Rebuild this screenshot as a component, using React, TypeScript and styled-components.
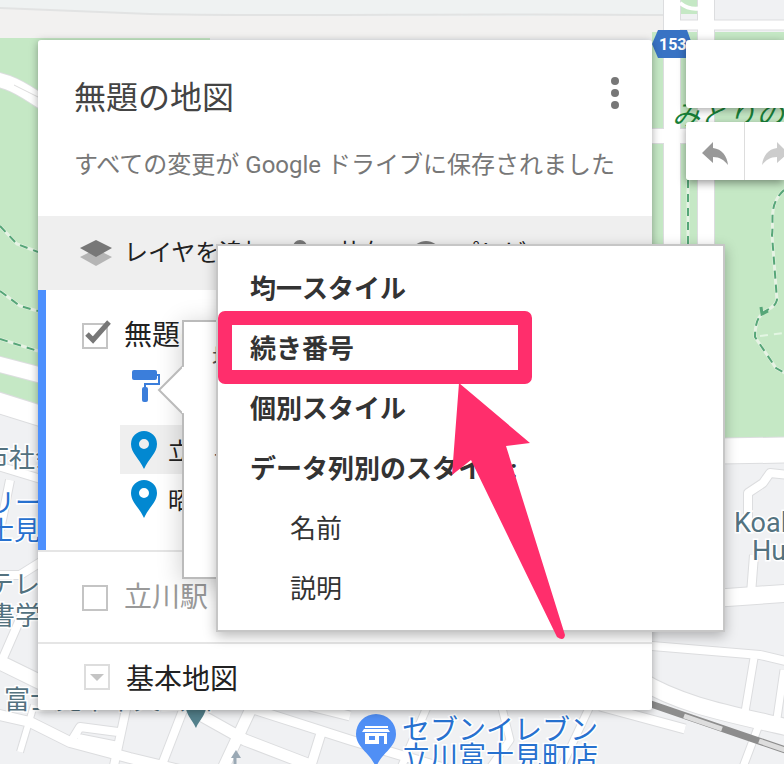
import React from 'react';
import styled, { createGlobalStyle } from 'styled-components';

const GlobalStyle = createGlobalStyle`
  *, *::before, *::after { box-sizing: border-box; }
  body {
    margin: 0;
    font-family: Roboto, "Noto Sans CJK JP", sans-serif;
    color: #222;
    background: #f0f1f3;
  }
  button { font: inherit; color: inherit; border: 0; background: none; padding: 0; cursor: pointer; }
`;

const Page = styled.main`
  position: relative;
  min-height: 100vh;
  overflow: hidden;
  display: flex;
  align-items: flex-start;
  gap: 34px;
  padding: 40px 0 54px 38px;
`;

const MapCanvas = styled.svg`
  position: absolute;
  inset: 0;
  width: 100%;
  height: 100%;
`;

const Panel = styled.section`
  position: relative;
  flex: 1;
  min-width: 0;
  background: #fff;
  border-radius: 3px;
  box-shadow: 0 2px 8px rgba(0, 0, 0, 0.35);
`;

const PanelHeader = styled.header`
  display: flex;
  justify-content: space-between;
  align-items: flex-start;
  height: 176px;
  padding: 34px 28px 0 36px;
`;

const Headings = styled.div`
  display: flex;
  flex-direction: column;
  gap: 27px;
  white-space: nowrap;
`;

const Title = styled.h1`
  margin: 0;
  font-size: 32px;
  line-height: 48px;
  font-weight: 400;
  color: #444;
`;

const SaveStatus = styled.p`
  margin: 0;
  font-size: 24px;
  line-height: 32px;
  color: #777;
`;

const KebabButton = styled.button`
  display: flex;
  width: 18px;
  height: 38px;
  margin-left: -18px;
  svg { width: 18px; height: 38px; }
`;

const ActionBar = styled.nav`
  display: flex;
  align-items: center;
  height: 74px;
  padding-left: 40px;
  background: #efefef;
  gap: 24px;
`;

const ActionButton = styled.button`
  display: flex;
  align-items: center;
  gap: 12px;
  font-size: 24px;
  line-height: 32px;
  white-space: nowrap;
  svg { width: 34px; height: 32px; }
`;

const Layer = styled.section<{ $active?: boolean }>`
  padding: ${(p) => (p.$active ? '26px 0 27px 44px' : '26px 0 24px 44px')};
  box-shadow: ${(p) => (p.$active ? 'inset 8px 0 #4d90fe' : 'none')};
  border-bottom: 2px solid #e5e5e5;
`;

const BaseLayer = styled.section`
  display: flex;
  align-items: center;
  gap: 16px;
  height: 66px;
  padding-left: 46px;
  font-size: 28px;
`;

const LayerTitle = styled.label<{ $muted?: boolean }>`
  display: flex;
  align-items: center;
  gap: 16px;
  font-size: 28px;
  line-height: 40px;
  color: ${(p) => (p.$muted ? '#999' : '#222')};
`;

const CheckBox = styled.span`
  position: relative;
  width: 26px;
  height: 26px;
  input {
    appearance: none;
    display: block;
    width: 26px;
    height: 26px;
    margin: 0;
    border: 2px solid #c4c4c4;
    background: #fff;
  }
  svg {
    position: absolute;
    left: 2px;
    top: -4px;
    width: 28px;
    height: 26px;
    pointer-events: none;
  }
`;

const ExpandButton = styled.button`
  display: flex;
  width: 26px;
  height: 26px;
  border: 2px solid #ddd;
`;

const StyleButton = styled.button`
  display: block;
  height: 34px;
  margin: 13px 0 0 50px;
  svg { display: block; width: 28px; height: 34px; }
`;

const PlaceList = styled.ul`
  list-style: none;
  margin: 22px 0 0 38px;
  padding: 0;
`;

const Place = styled.li<{ $selected?: boolean }>`
  display: flex;
  align-items: center;
  gap: 11px;
  height: 49px;
  padding-left: 11px;
  font-size: 24px;
  background: ${(p) => (p.$selected ? '#efefef' : 'transparent')};
  svg { width: 26px; height: 38px; }
`;

const Bubble = styled.aside`
  position: absolute;
  left: 144px;
  top: 280px;
  width: 420px;
  height: 259px;
  padding: 20px 28px;
  display: flex;
  flex-direction: column;
  gap: 68px;
  background: #fff;
  border: 2px solid #bbb;
  box-shadow: 0 4px 24px rgba(0, 0, 0, 0.2);
  font-size: 22px;
  line-height: 32px;
  color: #555;
`;

const BubblePointer = styled.svg`
  position: absolute;
  left: -28px;
  top: 42px;
  width: 28px;
  height: 52px;
`;

const Menu = styled.div`
  position: absolute;
  left: 178px;
  top: 204px;
  width: 509px;
  padding: 10px 0 14px;
  display: flex;
  flex-direction: column;
  background: #fff;
  border: 2px solid #c6c6c6;
  box-shadow: 0 4px 12px rgba(0, 0, 0, 0.28);
`;

const MenuItem = styled.button<{ $nested?: boolean }>`
  height: 60px;
  padding-left: ${(p) => (p.$nested ? 72 : 32)}px;
  text-align: left;
  font-size: 26px;
  font-weight: ${(p) => (p.$nested ? 400 : 700)};
  color: #333;
`;

const Annotation = styled.svg`
  position: absolute;
  left: -2px;
  top: 62px;
  width: 360px;
  height: 340px;
  pointer-events: none;
`;

const MapTools = styled.div`
  position: relative;
  width: 98px;
  display: flex;
  flex-direction: column;
  gap: 14px;
`;

const SearchBox = styled.input`
  width: 100%;
  height: 68px;
  border: 0;
  padding: 0 16px;
  background: #fff;
  border-radius: 3px 0 0 3px;
  box-shadow: 0 2px 8px rgba(0, 0, 0, 0.35);
`;

const ToolGroup = styled.div`
  display: flex;
  height: 58px;
  background: #fff;
  border-radius: 3px 0 0 3px;
  overflow: hidden;
`;

const ToolShadow = styled.div`
  border-radius: 3px 0 0 3px;
  box-shadow: 0 3px 8px rgba(0, 0, 0, 0.4);
`;

const ToolButton = styled.button`
  flex: none;
  width: 59px;
  padding: 20px 16px;
  border-right: 1px solid #ddd;
  svg { display: block; width: 27px; height: 24px; }
`;

const roads = [
  { d: 'M672 -10V250 M706 -10V250', w: 16 },
  { d: 'M664 25H790', w: 9 },
  { d: 'M650 136H688', w: 14 },
  { d: 'M720 451L790 450', w: 25 },
  { d: 'M-10 78C8 81 18 86 42 102', w: 14 },
  { d: 'M-10 362L44 376', w: 15 },
  { d: 'M-10 400L44 417', w: 20 },
  { d: 'M-5 465L44 480 M10 480L0 530 M-5 575H20L44 560 M24 610L0 665', w: 8 },
  { d: 'M-5 660L44 684', w: 14 },
  { d: 'M-5 714L30 722L70 742L130 758L200 775', w: 10 },
  { d: 'M34 705L20 752', w: 6 },
  { d: 'M72 740L80 727L118 732 M128 700L112 775 M185 705L158 775 M78 738L118 746', w: 8 },
  { d: 'M195 712L245 740L310 765 M255 700L220 775', w: 11 },
  { d: 'M250 708L350 740L450 770 M322 730L308 775 M310 706L350 716', w: 9 },
  { d: 'M430 700L400 770 M500 700L510 740L485 775 M590 706L560 770', w: 7 },
  { d: 'M720 598L790 593', w: 17 },
  { d: 'M751 594L754 555 M748 525L748 493L763 483L770 473L790 475', w: 8 },
  { d: 'M640 645L760 655L790 662', w: 8 },
  { d: 'M640 680C680 705 730 714 790 728', w: 16 },
  { d: 'M754 658L744 718 M784 670L776 725 M760 722L740 775', w: 7 },
  { d: 'M600 706L685 729', w: 9 },
];

const trails =
  'M0 226L17 244L38 252 M0 291L20 306L38 311 M0 339L38 351 M688 180V245 M784 190C768 205 774 220 772 235L777 300C774 310 765 309 762 314C756 319 755 329 755 337L776 368L790 376';

function BaseMap() {
  return (
    <MapCanvas viewBox="0 0 784 764" preserveAspectRatio="xMinYMin slice" aria-label="地図">
      <rect width="784" height="764" fill="#f0f1f3" />
      <path d="M0 0H664V38H0Z" fill="#f2f1f0" />
      <path d="M0 0H664V15C400 18 250 16 150 14L0 8Z" fill="#eff2f2" />
      <path d="M0 8L150 14C300 17 450 13 664 15" fill="none" stroke="#e2e3e3" strokeWidth="2" />
      <path d="M0 38H210V420L38 408L0 397Z" fill="#c5e8c5" />
      <path d="M652 32H784V438H652Z M680 0H698V14H680Z" fill="#c5e8c5" />
      {roads.map((r) => (
        <path key={`c${r.d}`} d={r.d} fill="none" stroke="#dcdddf" strokeWidth={r.w + 2} strokeLinejoin="round" />
      ))}
      {roads.map((r) => (
        <path key={r.d} d={r.d} fill="none" stroke="#fff" strokeWidth={r.w} strokeLinejoin="round" />
      ))}
      <path d="M680 3Q690 11 702 8" fill="none" stroke="#fff" strokeWidth="4" />
      <path d="M14 85L40 98" stroke="#ddd" />
      <path d={trails} fill="none" stroke="#e6f2e4" strokeWidth="3" />
      <path d={trails} fill="none" stroke="#56a678" strokeWidth="2" strokeDasharray="8 6" />
      <path d="M761 307L762 314L768 311" fill="none" stroke="#56a678" strokeWidth="3" />
      <path d="M760 336L784 333" stroke="#e3f6e3" strokeWidth="2" strokeDasharray="8 6" />

      <path d="M645 702L800 755" stroke="#8d8d8d" strokeWidth="7" />
      <path d="M684 716L722 729 M759 741L800 755" stroke="#ddd" strokeWidth="5" />
      <path d="M235 775V755" stroke="#9aa9b5" strokeWidth="3" />
      <path d="M231 758L236 750L241 758Z" fill="#9aa9b5" />

      <path d="M658 30H687L692 44L687 58H658L652 44Z" fill="#3973c4" />
      <text x="659" y="50" fontSize="16" fontWeight="700" fill="#fff">153</text>
      <text x="672" y="125" fontSize="28" fontStyle="italic" fill="#188038">みどりの</text>

      <g fill="#53727f" stroke="#fff" strokeWidth="3" paintOrder="stroke" fontSize="26">
        <text x="-17" y="467">市社会</text>
        <text x="-12" y="594">テレ</text>
        <text x="-11" y="625">書学</text>
        <text x="4" y="709">富士見市中央公園</text>
        <text x="734" y="532" fontSize="27">Koala</text>
        <text x="752" y="560" fontSize="27">Hub</text>
      </g>
      <g fill="#2771cf" stroke="#fff" strokeWidth="3" paintOrder="stroke" fontSize="26">
        <text x="-11" y="512">リー</text>
        <text x="-12" y="540">士見</text>
        <text x="402" y="740" fontSize="28">セブンイレブン</text>
        <text x="402" y="767" fontSize="28">立川富士見町店</text>
      </g>
      <path d="M184 700C186 716 192 719 196 728C200 719 206 716 208 700Z" fill="#53808b" />
      <path d="M356 734A20 20 0 0 1 396 734C396 748 380 754 376 768C372 754 356 748 356 734Z" fill="#508ff5" />
      <path d="M365 726H388V728H365Z M364 729H388L390 732H362Z M365 733H387V744H384V736H379V744H365Z" fill="#fff" />
      <rect x="369" y="736" width="6" height="4" fill="#508ff5" />
    </MapCanvas>
  );
}

const LayersIcon = () => (
  <svg viewBox="0 0 34 32" aria-hidden="true">
    <path d="M2 20L18 12L34 20L18 29Z" fill="#b5b5b5" />
    <path d="M2 11L18 3L34 11L18 20Z" fill="#777" />
  </svg>
);

const ShareIcon = () => (
  <svg viewBox="0 0 34 32" aria-hidden="true">
    <circle cx="9" cy="10" r="7" fill="#777" />
    <path d="M0 29C0 16 20 16 20 29Z M23 7H26V11H30V14H26V18H23V14H19V11H23Z" fill="#777" />
  </svg>
);

const EyeIcon = () => (
  <svg viewBox="0 0 34 32" aria-hidden="true">
    <path d="M1 16C7 0 27 0 33 16C27 31 7 31 1 16Z" fill="#777" />
    <circle cx="17" cy="16" r="7" fill="#efefef" />
  </svg>
);

const RollerIcon = () => (
  <svg viewBox="0 0 28 34" aria-hidden="true">
    <rect x="0" y="1" width="25" height="10" rx="2" fill="#3b7edb" />
    <path d="M24 6H27V15H13V20" fill="none" stroke="#3b7edb" strokeWidth="2" />
    <rect x="10" y="18" width="6" height="15" rx="2" fill="#3b7edb" />
  </svg>
);

const PinIcon = () => (
  <svg viewBox="0 0 26 38" aria-hidden="true">
    <path d="M13 0A13 13 0 0 0 0 13C0 22 8 27 13 38C18 27 26 22 26 13A13 13 0 0 0 13 0ZM13 8A5 5 0 1 1 13 18A5 5 0 1 1 13 8Z" fill="#0288d1" fillRule="evenodd" />
  </svg>
);

const UndoIcon = ({ color }: { color: string }) => (
  <svg viewBox="0 0 27 24" aria-hidden="true">
    <path d="M0 11L11 0V6C20 7 25 14 26 23C22 18 18 15 11 15V21Z" fill={color} />
  </svg>
);

const RedoIcon = ({ color }: { color: string }) => (
  <svg viewBox="0 0 27 24" aria-hidden="true">
    <path d="M27 11L16 0V6C7 7 2 14 1 23C5 18 9 15 16 15V21Z" fill={color} />
  </svg>
);

const menuItems = [
  { label: '均一スタイル' },
  { label: '続き番号' },
  { label: '個別スタイル' },
  { label: 'データ列別のスタイル:' },
  { label: '名前', nested: true },
  { label: '説明', nested: true },
];

function StyleMenu() {
  return (
    <Menu role="menu">
      {menuItems.map((item) => (
        <MenuItem key={item.label} role="menuitem" $nested={item.nested}>
          {item.label}
        </MenuItem>
      ))}
      <Annotation viewBox="0 0 360 340" aria-hidden="true">
        <rect x="9" y="10" width="300" height="59" fill="none" stroke="#ff2e6c" strokeWidth="14" strokeLinejoin="round" />
        <path
          d="M243 75L314 135L290 138L349 327Q348 334 341 329L255 152L236 167Z"
          fill="#ff2e6c"
        />
      </Annotation>
    </Menu>
  );
}

export default function App() {
  return (
    <>
      <GlobalStyle />
      <Page>
        <BaseMap />
        <Panel>
          <PanelHeader>
            <Headings>
              <Title>無題の地図</Title>
              <SaveStatus>すべての変更が Google ドライブに保存されました</SaveStatus>
            </Headings>
            <KebabButton aria-label="メニュー">
              <svg viewBox="0 0 18 38" fill="#777" aria-hidden="true">
                <circle cx="9" cy="7" r="4" />
                <circle cx="9" cy="19" r="4" />
                <circle cx="9" cy="31" r="4" />
              </svg>
            </KebabButton>
          </PanelHeader>
          <ActionBar>
            <ActionButton><LayersIcon />レイヤを追加</ActionButton>
            <ActionButton><ShareIcon />共有</ActionButton>
            <ActionButton><EyeIcon />プレビュー</ActionButton>
          </ActionBar>
          <Layer $active>
            <LayerTitle>
              <CheckBox>
                <input type="checkbox" defaultChecked />
                <svg viewBox="0 0 28 26" aria-hidden="true">
                  <path d="M3 15L9 21L25 3" fill="none" stroke="#777" strokeWidth="5" />
                </svg>
              </CheckBox>
              無題のレイヤ
            </LayerTitle>
            <StyleButton aria-label="スタイル"><RollerIcon /></StyleButton>
            <PlaceList>
              <Place $selected><PinIcon />立川駅</Place>
              <Place><PinIcon />昭和記念公園</Place>
            </PlaceList>
          </Layer>
          <Layer>
            <LayerTitle $muted>
              <CheckBox><input type="checkbox" /></CheckBox>
              立川駅
            </LayerTitle>
          </Layer>
          <BaseLayer>
            <ExpandButton aria-label="基本地図を開く">
              <svg viewBox="0 0 22 22" aria-hidden="true"><path d="M4 8H18L11 15Z" fill="#c4c4c4" /></svg>
            </ExpandButton>
            基本地図
          </BaseLayer>
          <Bubble>
            <BubblePointer viewBox="0 0 28 52" aria-hidden="true">
              <path d="M28 1L3 26L28 51Z" fill="#fff" />
              <path d="M28 1L3 26L28 51" fill="none" stroke="#bbb" strokeWidth="2" />
              <path d="M27 3V49" stroke="#fff" strokeWidth="2" />
            </BubblePointer>
            <span>均一スタイル</span>
            <span>ラベルを設定</span>
          </Bubble>
          <StyleMenu />
        </Panel>
        <MapTools>
          <SearchBox aria-label="検索" />
          <ToolShadow>
            <ToolGroup>
              <ToolButton aria-label="元に戻す"><UndoIcon color="#999" /></ToolButton>
              <ToolButton aria-label="やり直し"><RedoIcon color="#ccc" /></ToolButton>
            </ToolGroup>
          </ToolShadow>
        </MapTools>
      </Page>
    </>
  );
}
